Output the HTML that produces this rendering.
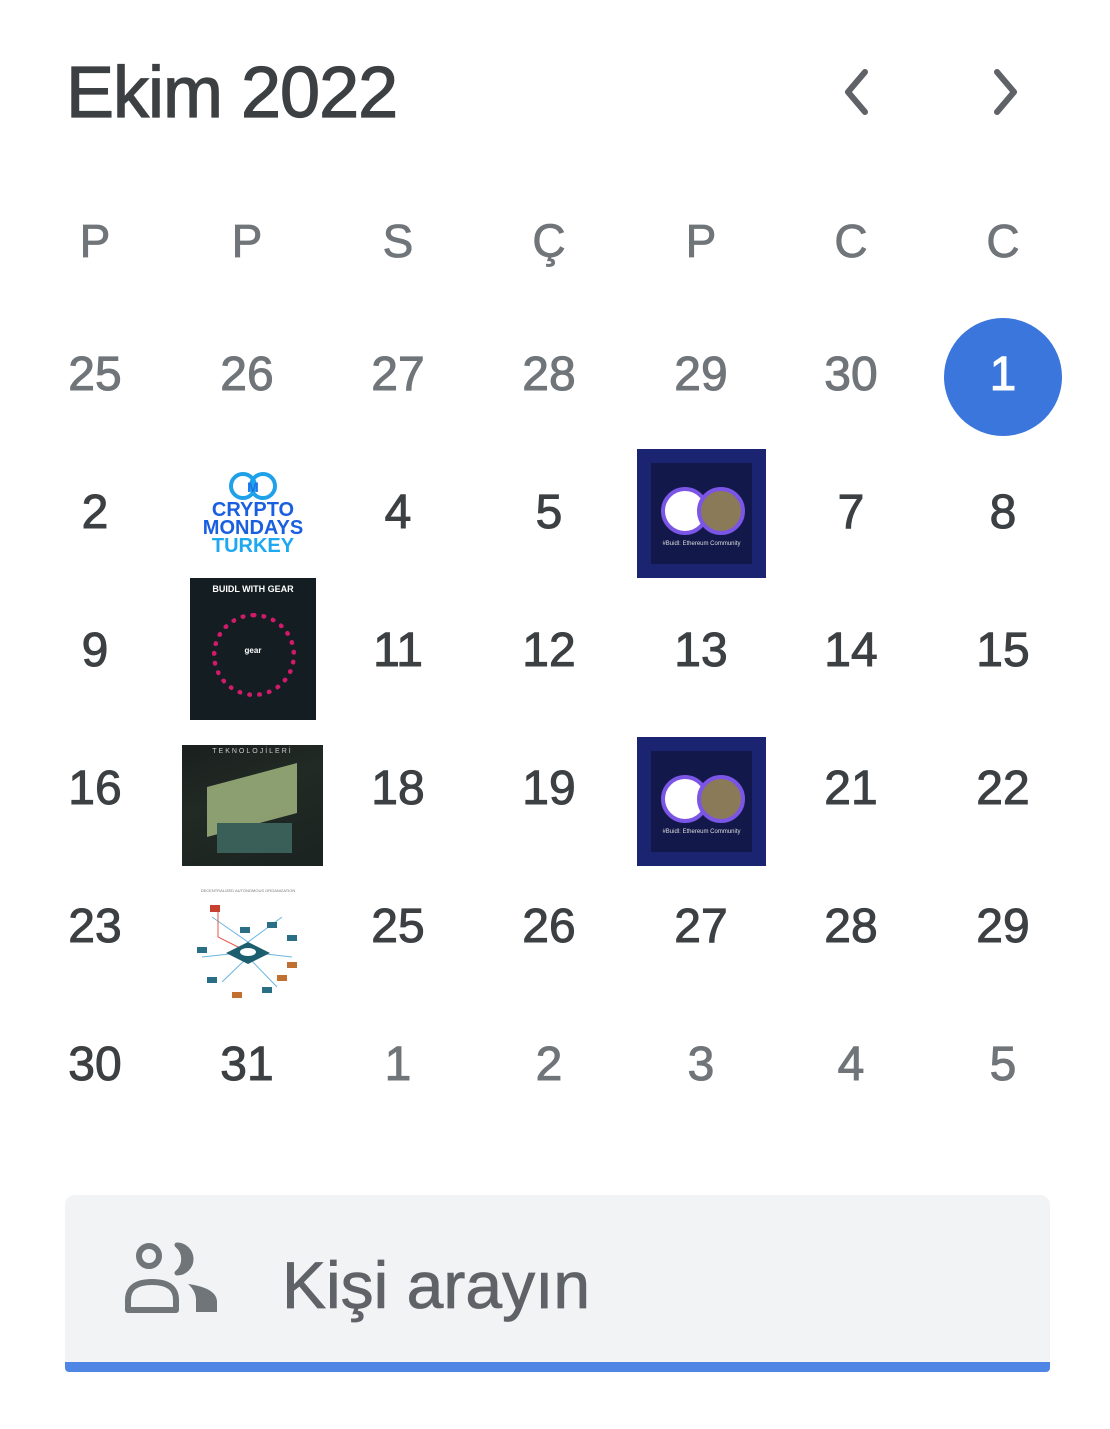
<!DOCTYPE html>
<html><head><meta charset="utf-8"><style>
body{margin:0;width:1110px;height:1429px;background:#fff;position:relative;overflow:hidden;font-family:"Liberation Sans",sans-serif}
.a{position:absolute}
.c{position:absolute;width:140px;margin-left:-70px;text-align:center;line-height:48px;font-size:48px;color:#3c4043;-webkit-text-stroke:1px currentColor}
.w{position:absolute;width:140px;margin-left:-70px;text-align:center;line-height:46px;font-size:46px;color:#70757a;top:218px;-webkit-text-stroke:0.8px currentColor}
.g{color:#70757a}
</style></head><body>
<div class="a" style="left:66px;top:57px;font-size:72px;line-height:72px;color:#3c4043;letter-spacing:-1px;-webkit-text-stroke:1.2px #3c4043">Ekim 2022</div>
<svg class="a" style="left:835px;top:62px" width="200" height="60"><path d="M30 10 L13 30 L30 50" stroke="#5f6368" stroke-width="6" fill="none" stroke-linecap="round" stroke-linejoin="round"/><path d="M162 10 L179 30 L162 50" stroke="#5f6368" stroke-width="6" fill="none" stroke-linecap="round" stroke-linejoin="round"/></svg>

<div class="w" style="left:95px">P</div><div class="w" style="left:247px">P</div><div class="w" style="left:398px">S</div><div class="w" style="left:549px">Ç</div><div class="w" style="left:701px">P</div><div class="w" style="left:851px">C</div><div class="w" style="left:1003px">C</div>

<div class="a" style="left:944px;top:318px;width:118px;height:118px;border-radius:50%;background:#3b76dc"></div>
<div class="c g" style="left:95px;top:351px">25</div><div class="c g" style="left:247px;top:351px">26</div><div class="c g" style="left:398px;top:351px">27</div><div class="c g" style="left:549px;top:351px">28</div><div class="c g" style="left:701px;top:351px">29</div><div class="c g" style="left:851px;top:351px">30</div><div class="c" style="left:1003px;top:351px;color:#fff">1</div>

<div class="c" style="left:95px;top:489px">2</div>
<div class="a" style="left:198px;top:470px;width:110px;text-align:center;font-weight:bold;line-height:18px;font-size:20px">
<svg width="60" height="32" viewBox="0 0 60 32"><circle cx="20" cy="16" r="12" stroke="#1ea1e8" stroke-width="4" fill="none"/><circle cx="40" cy="16" r="12" stroke="#1ea1e8" stroke-width="4" fill="none"/><text x="30" y="22" font-size="14" text-anchor="middle" fill="#1a73e8" font-family="Liberation Sans">M</text></svg>
<div style="color:#1a5fe0;margin-top:-4px">CRYPTO</div><div style="color:#1a5fe0">MONDAYS</div><div style="color:#1ea8ef">TURKEY</div></div>
<div class="c" style="left:398px;top:489px">4</div><div class="c" style="left:549px;top:489px">5</div>
<div class="a" style="left:637px;top:449px;width:129px;height:129px;background:#13184a;box-shadow:inset 0 0 0 14px #1b2470">
<div style="position:absolute;left:24px;top:38px;width:40px;height:40px;border-radius:50%;border:4px solid #7b55e6;background:#fff"></div>
<div style="position:absolute;left:60px;top:38px;width:40px;height:40px;border-radius:50%;border:4px solid #7b55e6;background:#8a7a58"></div>
<div style="position:absolute;left:0;top:92px;width:129px;text-align:center;color:#ddd;font-size:6px">#Buidl: Ethereum Community</div></div>
<div class="c" style="left:851px;top:489px">7</div><div class="c" style="left:1003px;top:489px">8</div>

<div class="c" style="left:95px;top:627px">9</div>
<div class="a" style="left:190px;top:578px;width:126px;height:142px;background:#141d22">
<div style="color:#fff;font-size:9px;font-weight:bold;text-align:center;margin-top:6px">BUIDL WITH GEAR</div>
<div style="position:absolute;left:22px;top:35px;width:74px;height:74px;border-radius:50%;border:5px dotted #d01a6a"></div>
<div style="position:absolute;left:0;top:68px;width:126px;text-align:center;color:#fff;font-size:8px;font-weight:bold">gear</div></div>
<div class="c" style="left:398px;top:627px">11</div><div class="c" style="left:549px;top:627px">12</div><div class="c" style="left:701px;top:627px">13</div><div class="c" style="left:851px;top:627px">14</div><div class="c" style="left:1003px;top:627px">15</div>

<div class="c" style="left:95px;top:765px">16</div>
<div class="a" style="left:182px;top:745px;width:141px;height:121px;background:linear-gradient(160deg,#1a1f1e,#222a25 40%,#1a2320)">
<div style="color:#ccc;font-size:7px;letter-spacing:2px;text-align:center;margin-top:3px">TEKNOLOJİLERİ</div>
<div style="position:absolute;left:25px;top:30px;width:90px;height:50px;background:#a7bd83;transform:skewY(-15deg);opacity:.8"></div>
<div style="position:absolute;left:35px;top:78px;width:75px;height:30px;background:#3a5e58"></div></div>
<div class="c" style="left:398px;top:765px">18</div><div class="c" style="left:549px;top:765px">19</div>
<div class="a" style="left:637px;top:737px;width:129px;height:129px;background:#13184a;box-shadow:inset 0 0 0 14px #1b2470">
<div style="position:absolute;left:24px;top:38px;width:40px;height:40px;border-radius:50%;border:4px solid #7b55e6;background:#fff"></div>
<div style="position:absolute;left:60px;top:38px;width:40px;height:40px;border-radius:50%;border:4px solid #7b55e6;background:#8a7a58"></div>
<div style="position:absolute;left:0;top:92px;width:129px;text-align:center;color:#ddd;font-size:6px">#Buidl: Ethereum Community</div></div>
<div class="c" style="left:851px;top:765px">21</div><div class="c" style="left:1003px;top:765px">22</div>

<div class="c" style="left:95px;top:903px">23</div>
<svg class="a" style="left:182px;top:887px" width="132" height="120"><text x="66" y="5" font-size="4" text-anchor="middle" fill="#777" font-family="Liberation Sans">DECENTRALIZED AUTONOMOUS ORGANIZATION</text>
<g stroke="#6bb6e0" fill="none"><path d="M30 30 L66 55 L100 30 M20 70 L66 65 L110 70 M40 95 L66 70 L95 100"/></g>
<path d="M36 25 L36 50 L60 62" stroke="#e4554a" fill="none"/>
<path d="M66 55 L88 66 L66 77 L44 66Z" fill="#1d5e6e"/><ellipse cx="66" cy="65" rx="8" ry="4" fill="#fff"/>
<g fill="#2b6f86"><rect x="15" y="60" width="10" height="6"/><rect x="85" y="35" width="10" height="6"/><rect x="105" y="48" width="10" height="6"/><rect x="25" y="90" width="10" height="6"/><rect x="80" y="100" width="10" height="6"/><rect x="58" y="40" width="10" height="6"/></g>
<g fill="#c07030"><rect x="105" y="75" width="10" height="6"/><rect x="50" y="105" width="10" height="6"/><rect x="95" y="88" width="10" height="6"/></g>
<rect x="28" y="18" width="10" height="7" fill="#c94030"/></svg>
<div class="c" style="left:398px;top:903px">25</div><div class="c" style="left:549px;top:903px">26</div><div class="c" style="left:701px;top:903px">27</div><div class="c" style="left:851px;top:903px">28</div><div class="c" style="left:1003px;top:903px">29</div>

<div class="c" style="left:95px;top:1041px">30</div><div class="c" style="left:247px;top:1041px">31</div><div class="c g" style="left:398px;top:1041px">1</div><div class="c g" style="left:549px;top:1041px">2</div><div class="c g" style="left:701px;top:1041px">3</div><div class="c g" style="left:851px;top:1041px">4</div><div class="c g" style="left:1003px;top:1041px">5</div>

<div class="a" style="left:65px;top:1195px;width:985px;height:177px;background:#f1f3f4;border-radius:10px 10px 4px 4px;overflow:hidden"><div style="position:absolute;left:0;bottom:0;width:100%;height:10px;background:#4f85e5"></div></div>
<svg class="a" style="left:124px;top:1242px" width="96" height="72"><circle cx="25" cy="14" r="10" stroke="#70757a" stroke-width="6" fill="none"/><path d="M53 3 A14 14 0 0 1 53 31 A18 18 0 0 0 53 3Z" fill="#70757a" stroke="#70757a" stroke-width="5" stroke-linejoin="round"/><path d="M4 68 L4 58 Q4 40 28 40 Q52 40 52 58 L52 68Z" stroke="#70757a" stroke-width="6" fill="none" stroke-linejoin="round"/><path d="M64 42 Q93 46 93 60 L93 70 L72 70 L72 58 Q72 49 64 42Z" fill="#70757a"/></svg>
<div class="a" style="left:282px;top:1252px;font-size:66px;line-height:66px;color:#5f6368;-webkit-text-stroke:0.8px #5f6368">Kişi arayın</div>
</body></html>
